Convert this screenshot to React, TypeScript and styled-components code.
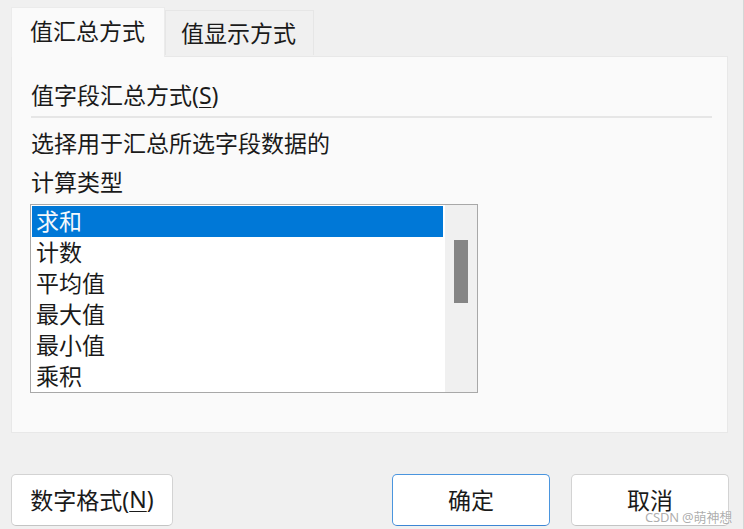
import React from "react";
import styled, { createGlobalStyle } from "styled-components";

const Global = createGlobalStyle`
  html, body { margin: 0; padding: 0; background: #f0f0f0; }
  * { box-sizing: border-box; }
`;

const FONT = `"Noto Sans", "Noto Sans CJK SC", sans-serif`;

const Dialog = styled.div`
  position: relative;
  width: 744px;
  height: 529px;
  background: #f0f0f0;
  border-right: 1px solid #d6d6d6;
  font-family: ${FONT};
  color: #1a1a1a;
  display: flex;
  flex-direction: column;
  padding: 7px 15px 0 11px;
  overflow: hidden;
`;

const TabBar = styled.div`
  display: flex;
  align-items: flex-start;
  height: 49px;
`;

const Tab = styled.div<{ $active?: boolean }>`
  font-size: 23px;
  line-height: 1;
  display: flex;
  align-items: center;
  justify-content: center;
  width: ${(p) => (p.$active ? 154 : 149)}px;
  height: ${(p) => (p.$active ? 50 : 45)}px;
  margin-top: ${(p) => (p.$active ? 0 : 3)}px;
  padding-right: ${(p) => (p.$active ? 1 : 2)}px;
  background: ${(p) => (p.$active ? "#fafafa" : "#f0f0f0")};
  border: 1px solid ${(p) => (p.$active ? "#ebebeb" : "#e6e6e6")};
  border-bottom: none;
  position: relative;
  z-index: ${(p) => (p.$active ? 2 : 1)};
  padding-bottom: ${(p) => (p.$active ? 2 : 0)}px;
`;

const Panel = styled.div`
  height: 377px;
  background: #fafafa;
  border: 1px solid #e8e8e8;
  padding: 23px 15px 0 18px;
  display: flex;
  flex-direction: column;
  align-items: flex-start;
`;

const GroupLabel = styled.div`
  font-size: 23px;
  line-height: 30px;
  padding-left: 1px;
`;

const Separator = styled.div`
  align-self: stretch;
  height: 2px;
  margin: 6px 0 0 1px;
  background: #e6e6e6;
`;

const Description = styled.div`
  font-size: 23px;
  line-height: 39px;
  margin-top: 6px;
  padding-left: 1px;
`;

const ListBox = styled.div`
  margin-top: 2px;
  width: 448px;
  height: 189px;
  border: 1px solid #a8a8a8;
  background: #ffffff;
  display: flex;
`;

const Rows = styled.div`
  width: 413px;
  padding: 1px 1px 0 1px;
  display: flex;
  flex-direction: column;
`;

const Row = styled.div<{ $selected?: boolean }>`
  height: 31px;
  line-height: 31px;
  font-size: 23px;
  padding-left: 4px;
  background: ${(p) => (p.$selected ? "#0078d7" : "transparent")};
  color: ${(p) => (p.$selected ? "#f4f8fc" : "#1a1a1a")};
`;

const Track = styled.div`
  width: 32px;
  margin-left: 1px;
  background: #f0f0f0;
  padding: 35px 0 0 9px;
`;

const Thumb = styled.div`
  width: 14px;
  height: 63px;
  background: #858585;
`;

const ButtonRow = styled.div`
  display: flex;
  align-items: center;
  margin-top: 41px;
  margin-right: -1px;
  gap: 21px;
`;

const Button = styled.button<{ $width: number; $default?: boolean }>`
  width: ${(p) => p.$width}px;
  height: 52px;
  font-family: ${FONT};
  font-size: 23px;
  color: #1a1a1a;
  background: #ffffff;
  border: 1px solid ${(p) => (p.$default ? "#4a95de" : "#d3d3d3")};
  border-bottom-color: ${(p) => (p.$default ? "#3c86d4" : "#c4c4c4")};
  border-radius: 5px;
  padding: 0 0 2px 0;
  display: flex;
  align-items: center;
  justify-content: center;
`;

const Spacer = styled.div`
  flex: 1;
`;

const Key = styled.span`
  text-decoration: underline;
  text-underline-offset: 3px;
  text-decoration-thickness: 1px;
`;

const Watermark = styled.div`
  position: absolute;
  right: 11px;
  bottom: 4px;
  font-family: "Noto Sans", "Noto Sans CJK SC", sans-serif;
  font-size: 13px;
  line-height: 16px;
  color: rgba(160, 160, 160, 0.85);
  text-shadow: 0 0 1px rgba(255, 255, 255, 0.9);
  letter-spacing: -0.2px;
  pointer-events: none;
`;

const items = ["求和", "计数", "平均值", "最大值", "最小值", "乘积"];

export default function App() {
  return (
    <>
      <Global />
      <Dialog>
        <TabBar>
          <Tab $active>值汇总方式</Tab>
          <Tab>值显示方式</Tab>
        </TabBar>
        <Panel>
          <GroupLabel>
            值字段汇总方式(<Key>S</Key>)
          </GroupLabel>
          <Separator />
          <Description>
            选择用于汇总所选字段数据的
            <br />
            计算类型
          </Description>
          <ListBox>
            <Rows>
              {items.map((t, i) => (
                <Row key={t} $selected={i === 0}>
                  {t}
                </Row>
              ))}
            </Rows>
            <Track>
              <Thumb />
            </Track>
          </ListBox>
        </Panel>
        <ButtonRow>
          <Button $width={162}>
            数字格式(<Key>N</Key>)
          </Button>
          <Spacer />
          <Button $width={158} $default>
            确定
          </Button>
          <Button $width={158}>取消</Button>
        </ButtonRow>
        <Watermark>CSDN @萌神想</Watermark>
      </Dialog>
    </>
  );
}
